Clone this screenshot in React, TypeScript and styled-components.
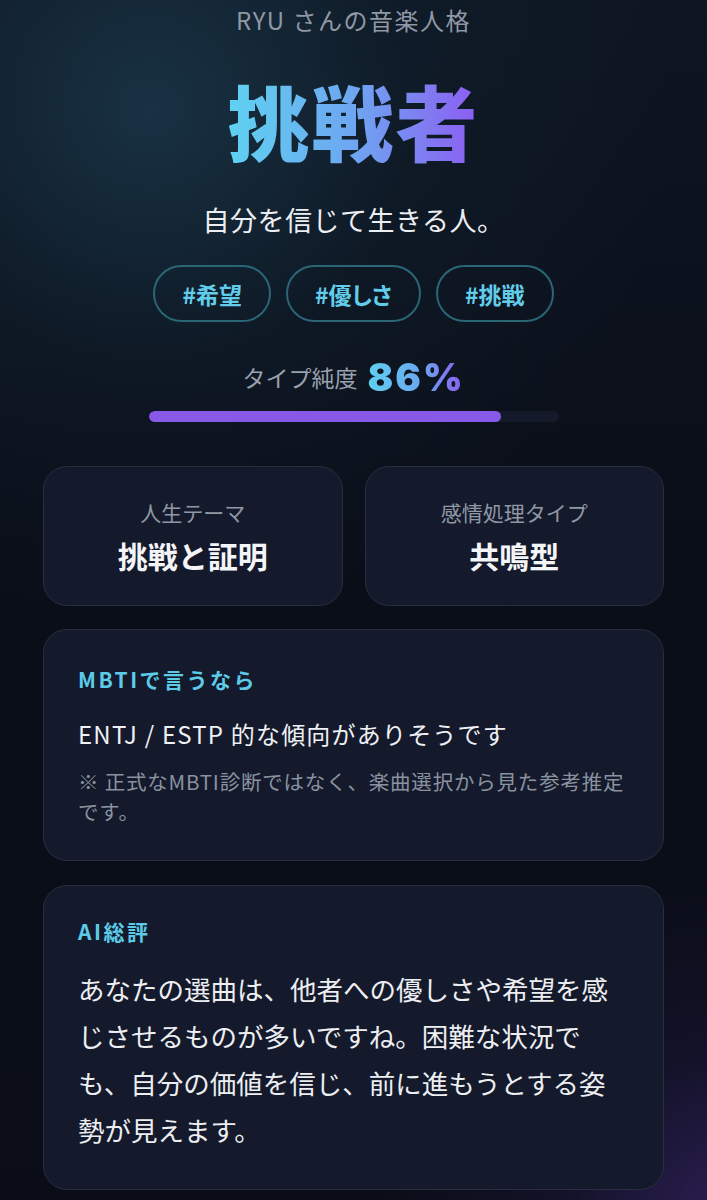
import { createGlobalStyle, styled } from "styled-components";

const GlobalStyle = createGlobalStyle`
  * {
    box-sizing: border-box;
  }

  html,
  body {
    margin: 0;
    padding: 0;
    background: #0a0e18;
  }

  body {
    font-family: "Noto Sans CJK JP", "Noto Sans", sans-serif;
    color: #eef0f4;
  }
`;

const tags = ["#希望", "#優しさ", "#挑戦"];

const stats = [
  { label: "人生テーマ", value: "挑戦と証明" },
  { label: "感情処理タイプ", value: "共鳴型" },
];

const purity = 86;

export default function App() {
  return (
    <>
      <GlobalStyle />
      <Page>
        <Hero>
          <Owner>RYU さんの音楽人格</Owner>
          <TypeName>挑戦者</TypeName>
          <Tagline>自分を信じて生きる人。</Tagline>
          <TagRow>
            {tags.map((tag) => (
              <Tag key={tag}>{tag}</Tag>
            ))}
          </TagRow>
          <PurityRow>
            <PurityLabel>タイプ純度</PurityLabel>
            <PurityValue>{purity}%</PurityValue>
          </PurityRow>
          <Bar>
            <BarFill style={{ width: `${purity}%` }} />
          </Bar>
        </Hero>

        <StatGrid>
          {stats.map((s) => (
            <StatCard key={s.label}>
              <StatLabel>{s.label}</StatLabel>
              <StatValue>{s.value}</StatValue>
            </StatCard>
          ))}
        </StatGrid>

        <Card $gap={23} $top={35} $bottom={34}>
          <CardTitle>MBTIで言うなら</CardTitle>
          <MbtiText>ENTJ / ESTP 的な傾向がありそうです</MbtiText>
          <Note>※ 正式なMBTI診断ではなく、楽曲選択から見た参考推定です。</Note>
        </Card>

        <Card $gap={24} $top={31} $bottom={36}>
          <CardTitle>AI総評</CardTitle>
          <Summary>
            あなたの選曲は、他者への優しさや希望を感じさせるものが多いですね。困難な状況でも、自分の価値を信じ、前に進もうとする姿勢が見えます。
          </Summary>
        </Card>
      </Page>
    </>
  );
}

const Page = styled.main`
  min-height: 1200px;
  padding: 4px 43px 40px;
  background:
    radial-gradient(circle at 150px 110px, rgba(34, 74, 96, 0.55) 0, rgba(20, 44, 60, 0.25) 260px, rgba(10, 14, 24, 0) 520px),
    radial-gradient(circle at 740px 1230px, rgba(76, 48, 140, 0.55) 0, rgba(46, 32, 92, 0.25) 180px, rgba(10, 14, 24, 0) 360px),
    linear-gradient(180deg, #0e1622 0%, #0a0e18 45%, #0a0d17 100%);
`;

const Hero = styled.section`
  display: flex;
  flex-direction: column;
  align-items: center;
  text-align: center;
`;

const Owner = styled.div`
  font-size: 24px;
  line-height: 32px;
  letter-spacing: 1.5px;
  color: #9098a6;
`;

const TypeName = styled.h1`
  margin: 34px 0 0;
  font-size: 82px;
  line-height: 100px;
  font-weight: 900;
  letter-spacing: 2px;
  background: linear-gradient(90deg, #5fd2f1 0%, #6ea6f1 50%, #8d5cf2 100%);
  -webkit-background-clip: text;
  background-clip: text;
  color: transparent;
`;

const Tagline = styled.p`
  margin: 32px 0 0;
  font-size: 27px;
  line-height: 36px;
  letter-spacing: 0.5px;
  color: #eceef2;
`;

const TagRow = styled.div`
  display: flex;
  gap: 15px;
  margin-top: 27px;
`;

const Tag = styled.span`
  display: inline-flex;
  align-items: center;
  height: 57px;
  padding: 0 27px;
  border: 2px solid #2a6676;
  border-radius: 29px;
  font-size: 23px;
  font-weight: 700;
  color: #62cdea;
  font-feature-settings: "palt";
`;

const PurityRow = styled.div`
  display: flex;
  align-items: center;
  gap: 10px;
  margin-top: 33px;
  height: 44px;
`;

const PurityLabel = styled.span`
  font-size: 23px;
  color: #9aa1ae;
`;

const PurityValue = styled.span`
  font-family: Inter, "Noto Sans", sans-serif;
  font-size: 38px;
  font-weight: 900;
  letter-spacing: 2px;
  background: linear-gradient(90deg, #5fcff0 0%, #6aa8f0 55%, #8a5cf0 100%);
  -webkit-background-clip: text;
  background-clip: text;
  color: transparent;
`;

const Bar = styled.div`
  width: 410px;
  height: 11px;
  margin-top: 12px;
  border-radius: 6px;
  background: #151a2b;
  overflow: hidden;
`;

const BarFill = styled.div`
  height: 100%;
  border-radius: 6px;
  background: #8858e6;
`;

const StatGrid = styled.section`
  display: grid;
  grid-template-columns: 1fr 1fr;
  gap: 22px;
  margin-top: 44px;
`;

const StatCard = styled.div`
  display: flex;
  flex-direction: column;
  align-items: center;
  justify-content: center;
  gap: 9px;
  height: 140px;
  border: 1.5px solid #272e3f;
  border-radius: 24px;
  background: #141a2b;
`;

const StatLabel = styled.div`
  font-size: 21px;
  line-height: 28px;
  color: #9098a6;
`;

const StatValue = styled.div`
  font-size: 30px;
  line-height: 40px;
  font-weight: 700;
  color: #f4f5f8;
`;

const Card = styled.section<{ $gap: number; $top: number; $bottom: number }>`
  margin-top: ${(p) => p.$gap}px;
  padding: ${(p) => p.$top}px 34px ${(p) => p.$bottom}px;
  border: 1.5px solid #272e3f;
  border-radius: 24px;
  background: #141a2b;
`;

const CardTitle = styled.h2`
  margin: 0;
  font-size: 21px;
  line-height: 28px;
  font-weight: 700;
  letter-spacing: 2.5px;
  color: #5ccbe8;
`;

const MbtiText = styled.p`
  margin: 24px 0 0;
  font-size: 24px;
  line-height: 34px;
  letter-spacing: 1.2px;
  color: #eef0f4;
`;

const Note = styled.p`
  margin: 15px 0 0;
  font-size: 20.5px;
  line-height: 30px;
  letter-spacing: 0.8px;
  color: #8a92a0;
`;

const Summary = styled.p`
  margin: 20px 0 0;
  font-size: 26.5px;
  line-height: 47px;
  color: #eceef2;
`;
